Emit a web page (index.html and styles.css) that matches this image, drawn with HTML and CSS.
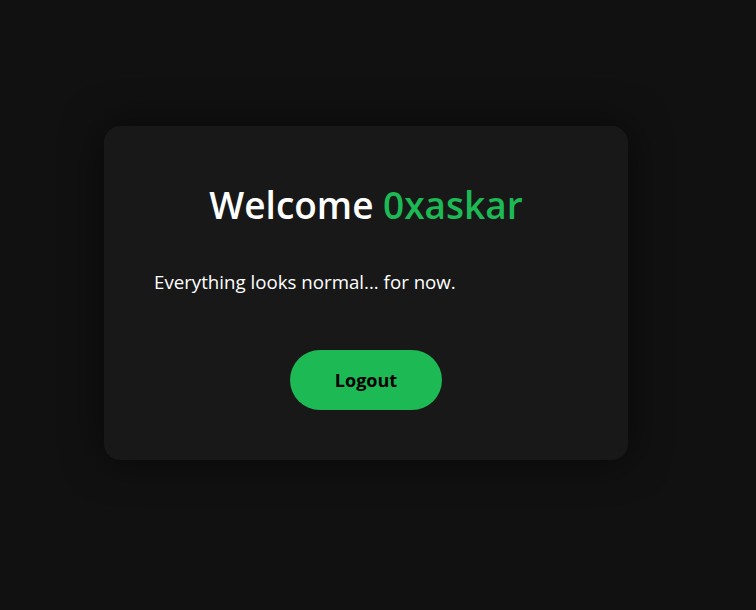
FILE: index.html
```html
<!DOCTYPE html>
<html lang="en">
<head>
    <meta charset="UTF-8">
    <meta name="viewport" content="width=device-width, initial-scale=1.0">
    <title>Dashboard</title>
    <link rel="stylesheet" href="styles.css">
</head>
<body>
<div class="page">
    <div class="card">
        <h1 class="title">Welcome <span class="user">0xaskar</span></h1>
        <p class="status">Everything looks normal... for now.</p>
        <div class="actions">
            <button class="logout">Logout</button>
        </div>
    </div>
</div>
</body>
</html>
```

FILE: styles.css
```css
*{
    margin: 0;
    padding: 0;
    box-sizing: border-box;
}
body{
    background: #111111;
    color: #ffffff;
    font-family: "Open Sans", "Noto Sans", sans-serif;
}
/*整页居中*/
.page{
    min-height: 100vh;
    display: flex;
    align-items: center;
    justify-content: center;
    padding: 0 24px 24px 0;
}
.card{
    width: 524px;
    background: #181818;
    border-radius: 16px;
    padding: 55px 50px 50px;
    box-shadow: 0 0 40px rgba(0, 0, 0, 0.6);
}
.title{
    font-size: 37px;
    line-height: 48px;
    font-weight: 600;
    text-align: center;
    color: #ffffff;
}
.title .user{
    color: #1db954;
}
.status{
    margin-top: 41px;
    font-size: 18.7px;
    line-height: 24px;
}
.actions{
    margin-top: 56px;
    display: flex;
    justify-content: center;
}
.logout{
    width: 152px;
    height: 60px;
    border: none;
    border-radius: 30px;
    background: #1db954;
    color: #000;
    font-family: "Open Sans", "Noto Sans", sans-serif;
    font-size: 18px;
    font-weight: 700;
    cursor: pointer;
}
```
